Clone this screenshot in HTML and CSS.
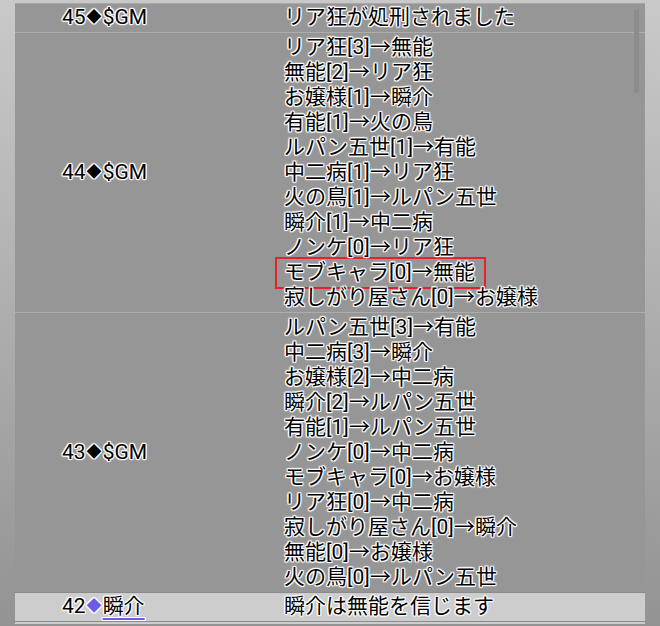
FILE: index.html
```html
<!DOCTYPE html>
<html lang="ja">
<head>
  <meta charset="UTF-8">
  <meta name="viewport" content="width=device-width, initial-scale=1.0">
  <title>投票ログ</title>
  <link rel="stylesheet" href="styles.css">
</head>
<body>
  <div class="log">
    <div class="log-row">
      <div class="who">45<span class="mark">◆</span>$GM</div>
      <div class="msg">リア狂が処刑されました</div>
    </div>

    <div class="log-row multi">
      <div class="who">44<span class="mark">◆</span>$GM</div>
      <div class="msg">
        <div>リア狂[3]→無能</div>
        <div>無能[2]→リア狂</div>
        <div>お嬢様[1]→瞬介</div>
        <div>有能[1]→火の鳥</div>
        <div>ルパン五世[1]→有能</div>
        <div>中二病[1]→リア狂</div>
        <div>火の鳥[1]→ルパン五世</div>
        <div>瞬介[1]→中二病</div>
        <div>ノンケ[0]→リア狂</div>
        <div class="marked">モブキャラ[0]→無能</div>
        <div>寂しがり屋さん[0]→お嬢様</div>
      </div>
    </div>

    <div class="log-row multi">
      <div class="who">43<span class="mark">◆</span>$GM</div>
      <div class="msg">
        <div>ルパン五世[3]→有能</div>
        <div>中二病[3]→瞬介</div>
        <div>お嬢様[2]→中二病</div>
        <div>瞬介[2]→ルパン五世</div>
        <div>有能[1]→ルパン五世</div>
        <div>ノンケ[0]→中二病</div>
        <div>モブキャラ[0]→お嬢様</div>
        <div>リア狂[0]→中二病</div>
        <div>寂しがり屋さん[0]→瞬介</div>
        <div>無能[0]→お嬢様</div>
        <div>火の鳥[0]→ルパン五世</div>
      </div>
    </div>

    <div class="log-row player">
      <div class="who">42<span class="mark">◆</span><span class="name">瞬介</span></div>
      <div class="msg">瞬介は無能を信じます</div>
    </div>

    <div class="log-row player empty"></div>

    <div class="scroll-thumb"></div>
  </div>
</body>
</html>
```

FILE: styles.css
```css
html, body {
  height: 100%;
}

body {
  margin: 0;
  overflow: hidden;
  background: linear-gradient(#c9c9c9, #939393);
  font-family: Roboto, "Noto Sans CJK JP", sans-serif;
  font-size: 21px;
  color: #000;
}

.log {
  position: relative;
  margin: 3px 15px 0;
  background-color: #969696;
  border-top: 1px solid #a8a8a8;
}

.log-row {
  display: flex;
  padding: 1px 0 2px;
  border-bottom: 1px solid #adadad;
  line-height: 25px;
  text-shadow: 1px 0 1px #fff, -1px 0 1px #fff, 0 1px 1px #fff, 0 -1px 1px #fff,
    1px 1px 1px #fff, -1px -1px 1px #fff, 1px -1px 1px #fff, -1px 1px 1px #fff;
}

.multi {
  padding-top: 2px;
}

.who {
  width: 222px;
  padding-left: 47px;
  flex-shrink: 0;
  display: flex;
  align-items: center;
}

.mark {
  font-size: 15px;
  margin: 0 1px;
}

.msg {
  flex: 1;
}

.marked {
  width: fit-content;
  margin: -3px 0 -4px -9px;
  padding: 1px 9px 2px 7px;
  border: 2px solid #e2232a;
}

.player {
  background-color: #cdcdcd;
  border-top: 1px solid #8a8a8a;
  border-bottom: 1px solid #8a8a8a;
  margin-top: -1px;
}

.player .mark {
  color: #6f5ce6;
}

.player .name {
  text-decoration: underline;
  text-decoration-color: #6f5ce6;
  text-decoration-thickness: 2px;
  text-underline-offset: 5px;
}

.empty {
  height: 2px;
  padding: 0;
  border-bottom: none;
}

.scroll-thumb {
  position: absolute;
  top: 5px;
  right: 6px;
  width: 5px;
  height: 84px;
  background-color: #8c8c8c;
  border-radius: 2px;
}
```
